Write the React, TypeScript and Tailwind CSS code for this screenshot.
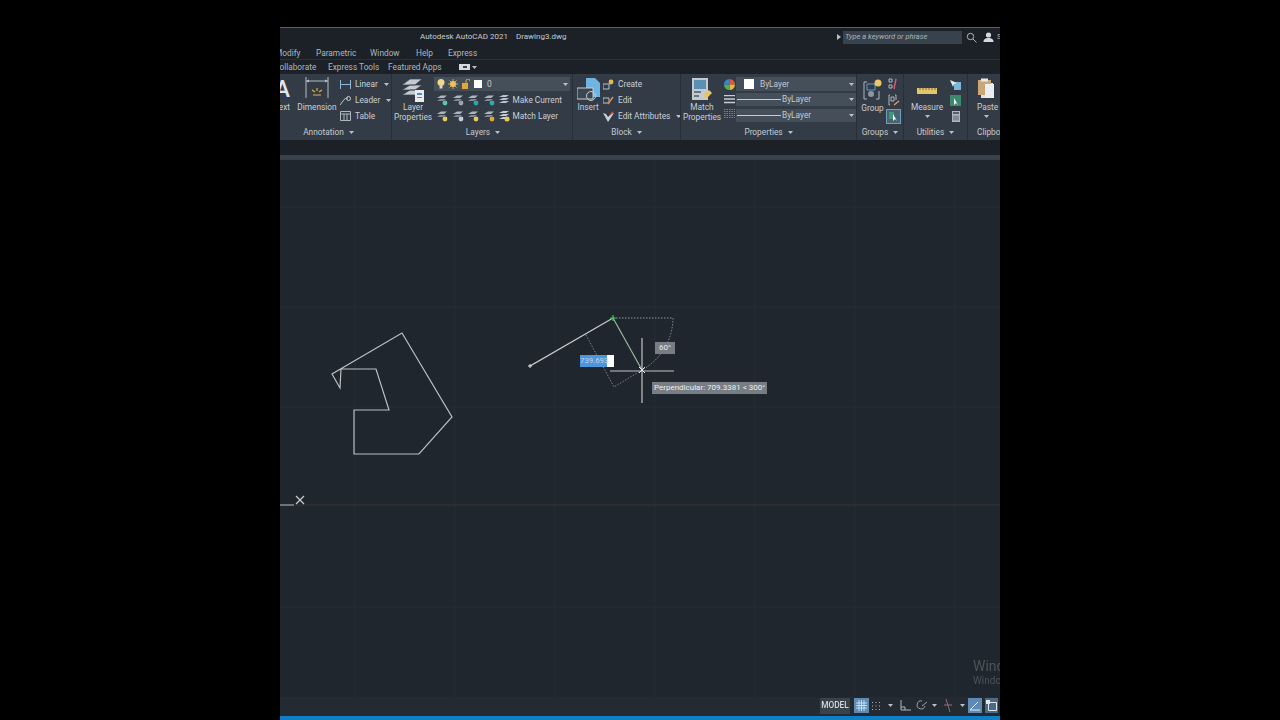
import React from "react";

const T = ({ c = "", children }: { c?: string; children: React.ReactNode }) => (
  <span className={"whitespace-nowrap " + c}>{children}</span>
);
const Caret = ({ c = "" }: { c?: string }) => (
  <svg width="5" height="3" viewBox="0 0 5 3" className={"shrink-0 " + c}><path d="M0 0h5L2.5 3z" fill="#b8c0c8" /></svg>
);

const Panel = ({ w, label, children, lc = "" }: { w: string; label: string; lc?: string; children: React.ReactNode }) => (
  <div className={"flex flex-col shrink-0 overflow-hidden border-r border-[#272f37] " + w}>
    <div className="flex h-[51px] pt-[3px] overflow-hidden">{children}</div>
    <div className={"h-[13px] mt-[1px] flex items-center justify-center gap-[5px] text-[8.3px] text-[#c3cad1] " + lc}>
      <T>{label}</T>
      <Caret />
    </div>
  </div>
);

const Row = ({ icon, label, caret, c = "" }: { icon: React.ReactNode; label: string; caret?: boolean; c?: string }) => (
  <div className={"h-[16px] flex items-center gap-[4px] text-[8.3px] text-[#c8cfd6] " + c}>
    {icon}
    <T>{label}</T>
    {caret && <Caret c="ml-[2px]" />}
  </div>
);

const Big = ({ icon, l1, l2, w, c = "" }: { icon: React.ReactNode; l1: string; l2?: string; w: string; c?: string }) => (
  <div className={"flex flex-col items-center shrink-0 text-[8.3px] leading-[10px] text-[#c8cfd6] " + w + " " + c}>
    <div className="h-[25px] flex items-end justify-center">{icon}</div>
    <T>{l1}</T>
    {l2 && <T>{l2}</T>}
  </div>
);

const LayerChip = ({ dot = "#5fc4b0", lines = "#aeb7bf" }: { dot?: string; lines?: string }) => (
  <svg width="13" height="12" viewBox="0 0 13 12" className="shrink-0">
    <path d="M1 4L5 1.5h6L8 4z" fill={lines} />
    <path d="M1 7l3-2h6l-3 2z" fill="#7f8a95" />
    <circle cx="9" cy="9" r="2.4" fill={dot} />
  </svg>
);

const Combo = ({ w, h, children, c = "" }: { w: string; h: string; children: React.ReactNode; c?: string }) => (
  <div className={"flex items-center bg-[#444f5a] text-[8.3px] text-[#c3cad1] " + w + " " + h + " " + c}>
    {children}
    <Caret c="ml-auto mr-[2px]" />
  </div>
);

const Sheet = () => (
  <svg width="20" height="22" viewBox="0 0 20 22">
    <path d="M4 6h12v15H4z" fill="#dfe3e6" />
    <path d="M1 3h13v15H1z" fill="#c9a777" />
    <path d="M4 1.5h7v3H4z" fill="#e8e8e8" />
    <path d="M8 7h9v14H8z" fill="#eceff1" />
  </svg>
);

export default function App() {
  return (
    <div className="w-[1280px] h-[720px] bg-black flex justify-center overflow-hidden" style={{ fontFamily: 'Roboto,"Noto Sans",sans-serif' }}>
      <div className="w-[720px] h-full flex flex-col overflow-hidden blur-[0.35px]">
        <div className="h-[27px] shrink-0 bg-black" />
        <div className="h-[1px] shrink-0 bg-[#3f6a78]" />

        {/* title bar */}
        <div className="h-[17px] shrink-0 bg-[#1b2127] flex items-center pt-[1px] text-[8px] text-[#c5ccd3]">
          <T c="ml-[140px]">Autodesk AutoCAD 2021</T>
          <T c="ml-[8px]">Drawing3.dwg</T>
          <svg width="4" height="6" viewBox="0 0 4 6" className="ml-auto"><path d="M0 0l4 3-4 3z" fill="#b8c0c8" /></svg>
          <div className="ml-[2px] w-[119px] h-[13px] bg-[#37424d] flex items-center pl-[2px] text-[7.5px] italic text-[#aab3bc]">
            <T>Type a keyword or phrase</T>
          </div>
          <svg width="11" height="11" viewBox="0 0 11 11" className="ml-[4px]"><circle cx="4.5" cy="4.5" r="3.2" fill="none" stroke="#aeb6be" /><path d="M7 7l3.5 3.5" stroke="#aeb6be" /></svg>
          <svg width="11" height="10" viewBox="0 0 11 10" className="ml-[6px]"><circle cx="5.5" cy="3" r="2.6" fill="#d4d9de" /><path d="M0.5 10c0-3 2-4 5-4s5 1 5 4z" fill="#d4d9de" /></svg>
          <div className="ml-[3px] w-[3px] overflow-hidden"><T c="text-[#aab3bc]">S</T></div>
        </div>

        {/* menu */}
        <div className="h-[15px] shrink-0 bg-[#1b2127] border-b border-[#29323a] flex items-center pt-[2px] text-[8.3px] text-[#aeb6be]">
          <T c="-ml-[5px] w-[25px]">Modify</T>
          <T c="ml-[16px] w-[38px]">Parametric</T>
          <T c="ml-[16px] w-[30px]">Window</T>
          <T c="ml-[16px] w-[16px]">Help</T>
          <T c="ml-[16px]">Express</T>
        </div>

        {/* tabs */}
        <div className="h-[14px] shrink-0 bg-[#1b2127] flex items-center text-[8.3px] text-[#aeb6be]">
          <T c="-ml-[6px] w-[41px]">Collaborate</T>
          <T c="ml-[13px] w-[47px]">Express Tools</T>
          <T c="ml-[13px] w-[51px]">Featured Apps</T>
          <div className="ml-[20px] w-[11px] h-[6px] bg-[#d5d9dd] flex items-center justify-center"><div className="w-[4px] h-[2px] bg-[#444]" /></div>
          <Caret c="ml-[2px]" />
        </div>

        {/* ribbon */}
        <div className="h-[66px] shrink-0 bg-[#333c46] flex overflow-hidden">
          <Panel w="w-[112px]" label="Annotation" lc="pr-[14px]">
            <div className="w-[10px] shrink-0 flex flex-col items-end overflow-hidden text-[#c8cfd6]">
              <T c="text-[23px] leading-[25px] font-medium text-[#e3e6e9]">A</T>
              <T c="text-[8.3px] leading-[10px]">ext</T>
            </div>
            <Big
              w="w-[40px]"
              c="ml-[7px]"
              l1="Dimension"
              icon={
                <svg width="24" height="22" viewBox="0 0 24 22" className="mb-[3px]">
                  <path d="M1 0v21M23 0v21M1 4h22" fill="none" stroke="#b4bcc4" />
                  <path d="M1 4l3-1.5v3zM23 4l-3-1.5v3z" fill="#b4bcc4" />
                  <path d="M7 13l3 2M17 13l-3 2M12 11v3M8 18h8" stroke="#d8b24a" strokeWidth="1.2" />
                </svg>
              }
            />
            <div className="ml-[3px] -mt-[1px] flex flex-col">
              <Row caret label="Linear" icon={<svg width="11" height="9" viewBox="0 0 11 9"><path d="M.5 0v9M10.500 0v9M.5 4.500h10" stroke="#8fb6d4" fill="none" /></svg>} />
              <Row caret label="Leader" icon={<svg width="11" height="9" viewBox="0 0 11 9"><path d="M0 9l3-4c1-2 3-3 5-3" stroke="#c0c7ce" fill="none" /><circle cx="8.500" cy="2.500" r="2" fill="none" stroke="#c0c7ce" /></svg>} />
              <Row label="Table" icon={<svg width="11" height="10" viewBox="0 0 11 10"><path d="M.5.5h10v9H.5zM.5 3h10M4 3v6.500M7 3v6.500" stroke="#aeb6be" fill="none" /></svg>} />
            </div>
          </Panel>

          <Panel w="w-[181px]" label="Layers" lc="pl-[2px]">
            <Big
              w="w-[42px]"
              l1="Layer"
              l2="Properties"
              icon={
                <svg width="24" height="24" viewBox="0 0 24 24">
                  <path d="M1 7L9 1h12l-7 6zM1 12l8-5h12l-7 5zM1 17l8-5h12l-7 5z" fill="#c4cad0" stroke="#333c46" strokeWidth=".7" />
                  <rect x="14" y="12" width="9" height="12" fill="#e8ecef" />
                  <path d="M16 15h5v2h-5zM16 19h5v1h-5z" fill="#4d8dc0" />
                </svg>
              }
            />
            <div className="flex flex-col">
              <Combo w="w-[136px]" h="h-[14px]" c="pl-[3px] gap-[2px]">
                <svg width="8" height="10" viewBox="0 0 8 10"><circle cx="4" cy="3.500" r="3.500" fill="#f2d58a" /><path d="M2.500 7h3v2.500h-3z" fill="#d9d9d9" /></svg>
                <svg width="10" height="10" viewBox="0 0 10 10" className="ml-[1px]"><circle cx="5" cy="5" r="3" fill="#f0c060" /><path d="M5 0v10M0 5h10M1.500 1.500l7 7M8.500 1.500l-7 7" stroke="#f0c060" strokeWidth=".8" /></svg>
                <svg width="9" height="10" viewBox="0 0 9 10" className="ml-[1px]"><path d="M1 4h6v6H1z" fill="#e0a93c" /><path d="M5 4V2a2 2 0 0 1 4 0" fill="none" stroke="#e0a93c" /></svg>
                <div className="ml-[2px] w-[8px] h-[8px] bg-white" />
                <T c="ml-[3px]">0</T>
              </Combo>
              <div className="h-[16px] mt-[1px] flex items-center pl-[2px] gap-[2.500px] text-[8.3px] text-[#c8cfd6]">
                <LayerChip /><LayerChip dot="#9aa4ad" /><LayerChip dot="#2fa8a0" /><LayerChip dot="#3aa8a8" />
                <svg width="12" height="12" viewBox="0 0 12 12"><path d="M1 3l4-2h6L8 3zM1 6l4-2h6L8 6zM1 9l4-2h6L8 9z" fill="#b7c3cf" /></svg>
                <T>Make Current</T>
              </div>
              <div className="h-[16px] flex items-center pl-[2px] gap-[2.500px] text-[8.3px] text-[#c8cfd6]">
                <LayerChip dot="#e8c860" /><LayerChip dot="#c6ccd2" /><LayerChip dot="#e8c860" /><LayerChip dot="#e0a93c" />
                <svg width="12" height="12" viewBox="0 0 12 12"><path d="M1 3l4-2h6L8 3zM1 6l4-2h6L8 6zM1 9l4-2h6L8 9z" fill="#c8ced4" /><circle cx="9" cy="9" r="2.500" fill="#e8c860" /></svg>
                <T>Match Layer</T>
              </div>
            </div>
          </Panel>

          <Panel w="w-[108px]" label="Block">
            <Big
              w="w-[30px]"
              l1="Insert"
              icon={
                <svg width="23" height="24" viewBox="0 0 23 24">
                  <path d="M9 0h9l5 5v14H9z" fill="#6fb5e3" />
                  <path d="M0 10h16v11H0z" fill="#3b4651" stroke="#c7ced5" />
                  <circle cx="14" cy="18" r="4.500" fill="none" stroke="#c7ced5" />
                </svg>
              }
            />
            <div className="-mt-[1px] flex flex-col">
              <Row label="Create" icon={<svg width="11" height="11" viewBox="0 0 11 11"><path d="M0 5h6v5H0z" fill="none" stroke="#b9c1c8" /><circle cx="8" cy="3" r="2.400" fill="#e8b75a" /></svg>} />
              <Row label="Edit" icon={<svg width="11" height="11" viewBox="0 0 11 11"><path d="M0 3h6v5H0z" fill="none" stroke="#b9c1c8" /><path d="M5 9l5-7" stroke="#e0885a" strokeWidth="1.500" /></svg>} />
              <Row caret label="Edit Attributes" icon={<svg width="11" height="11" viewBox="0 0 11 11"><path d="M0 2l5 9 6-9-3 1-3 3-2-3z" fill="#c9d0d6" /><path d="M7 4l3-3" stroke="#d05a4a" strokeWidth="1.200" /></svg>} />
            </div>
          </Panel>

          <Panel w="w-[176px]" label="Properties">
            <Big
              w="w-[40px]"
              c="ml-[1px]"
              l1="Match"
              l2="Properties"
              icon={
                <svg width="22" height="24" viewBox="0 0 22 24">
                  <path d="M1 0h16v22H1z" fill="#c4cad0" />
                  <path d="M3 2h12v9H3z" fill="#5c8fb4" />
                  <path d="M3 13h7v2H3zM3 17h5v2H3z" fill="#6b7680" />
                  <path d="M12 17l6-5 3 3-6 6z" fill="#e4c56e" />
                </svg>
              }
            />
            <div className="flex flex-col items-center w-[14px] pt-[2px] ml-[1px] gap-[5px]">
              <svg width="11" height="11" viewBox="0 0 11 11">
                <path d="M5.500 5.500V0A5.500 5.500 0 0 1 11 5.500z" fill="#e0563f" />
                <path d="M5.500 5.500H11A5.500 5.500 0 0 1 5.500 11z" fill="#e8b73c" />
                <path d="M5.500 5.500V11A5.500 5.500 0 0 1 0 5.500z" fill="#4fae5a" />
                <path d="M5.500 5.500H0A5.500 5.500 0 0 1 5.500 0z" fill="#3d86c6" />
              </svg>
              <svg width="11" height="9" viewBox="0 0 11 9"><path d="M0 .5h11M0 4h11M0 7.500h11" stroke="#c6ccd2" strokeWidth="1.500" /></svg>
              <svg width="11" height="9" viewBox="0 0 11 9"><path d="M0 .5h11M0 2.500h11M0 4.500h11M0 6.500h11M0 8.500h11" stroke="#98a1aa" strokeWidth=".7" strokeDasharray="1.500 1" /></svg>
            </div>
            <div className="flex flex-col ml-[1px]">
              <Combo w="w-[120px]" h="h-[14px]" c="pl-[8px]">
                <div className="w-[10px] h-[10px] bg-white" />
                <T c="ml-[6px]">ByLayer</T>
              </Combo>
              <Combo w="w-[120px]" h="h-[13px]" c="mt-[2px]">
                <div className="ml-[1px] w-[44px] h-[1px] bg-[#c3cad1]" />
                <T c="ml-[1px]">ByLayer</T>
              </Combo>
              <Combo w="w-[120px]" h="h-[13px]" c="mt-[3px]">
                <div className="ml-[1px] w-[44px] h-[1px] bg-[#c3cad1]" />
                <T c="ml-[1px]">ByLayer</T>
              </Combo>
            </div>
          </Panel>

          <Panel w="w-[47px]" label="Groups">
            <div className="flex flex-col items-center w-[27px] ml-[2px] text-[8.3px] text-[#c8cfd6]">
              <svg width="20" height="21" viewBox="0 0 20 21" className="mt-[2px]">
                <path d="M4 3H1v17h3M13 20h3V12" fill="none" stroke="#aeb6be" />
                <path d="M4 5h8v6H4z" fill="none" stroke="#5d9cc9" />
                <circle cx="8" cy="15" r="3" fill="#8d96a0" />
                <circle cx="15" cy="4" r="3.500" fill="#ecc566" />
              </svg>
              <T c="mt-[2px]">Group</T>
            </div>
            <div className="flex flex-col items-center w-[15px] gap-[4px] pt-[1px]">
              <svg width="11" height="12" viewBox="0 0 11 12"><path d="M1 1h3v3H1zM1 7h3v3H1z" fill="none" stroke="#aeb6be" /><path d="M8 1l-2 10" stroke="#d05a6a" strokeWidth="1.500" /></svg>
              <svg width="12" height="12" viewBox="0 0 12 12"><path d="M2 1H1v10h1M7 1h1v5M3 3h3v4H3z" fill="none" stroke="#aeb6be" /><path d="M6 11l5-4" stroke="#e0a05a" strokeWidth="1.500" /></svg>
              <div className="w-[15px] h-[15px] -mt-[1px] border border-[#6f9dbd] bg-[#4a6373] flex items-center justify-center">
                <svg width="11" height="11" viewBox="0 0 11 11"><path d="M1 1h5v7H1z" fill="#3c9a78" /><path d="M5 3v7l2-2 2 2z" fill="#fff" /></svg>
              </div>
            </div>
          </Panel>

          <Panel w="w-[64px]" label="Utilities">
            <div className="flex flex-col items-center w-[46px] text-[8.3px] text-[#c8cfd6]">
              <svg width="20" height="6" viewBox="0 0 20 6" className="mt-[11px]"><path d="M0 0h20v6H0z" fill="#e2c66e" /><path d="M3 0v2M6 0v2M9 0v2M12 0v2M15 0v2M18 0v2" stroke="#7c6a30" /></svg>
              <T c="mt-[8px] leading-[10px]">Measure</T>
              <Caret c="mt-[3px]" />
            </div>
            <div className="flex flex-col items-center w-[11px] gap-[5px] pt-[2px]">
              <svg width="11" height="11" viewBox="0 0 11 11"><path d="M4 3h7v8H4z" fill="#7eb6d8" /><path d="M0 1l3 7 1-3 3-1z" fill="#e7ebee" /></svg>
              <svg width="11" height="11" viewBox="0 0 11 11"><path d="M0 0h11v11H0z" fill="#3c8a6c" /><path d="M4 3v7l2-2 2 2z" fill="#fff" /></svg>
              <svg width="8" height="11" viewBox="0 0 8 11"><path d="M0 0h8v11H0z" fill="#aeb6be" /><path d="M1 1h6v2H1z" fill="#566069" /><path d="M2 4.500v5M4 4.500v5M6 4.500v5" stroke="#566069" /></svg>
            </div>
          </Panel>

          <div className="flex flex-col shrink-0 w-[32px] overflow-hidden text-[8.3px] text-[#c8cfd6]">
            <div className="h-[51px] pt-[3px] pl-[9px] flex flex-col items-start">
              <Sheet />
              <T c="leading-[10px] mt-[3px]">Paste</T>
              <Caret c="mt-[3px] ml-[7px]" />
            </div>
            <T c="h-[13px] mt-[1px] ml-[9px] flex items-center text-[#c3cad1]">Clipboard</T>
          </div>
        </div>

        <div className="h-[15px] shrink-0 bg-[#1b2127]" />
        <div className="h-[5px] shrink-0 bg-[#39414a]" />

        {/* drawing area */}
        <div className="relative flex-1 bg-[#1f262d] overflow-hidden">
          <svg width="720" height="537" viewBox="280 160 720 537" className="block">
            <path d="M355 160v537M455 160v537M555 160v537M655 160v537M755 160v537M855 160v537M955 160v537M280 207h720M280 307h720M280 407h720M280 607h720" stroke="#262d34" fill="none" />
            <path d="M295 505H1000" stroke="#41303a" />
            <path d="M280 505h14" stroke="#b8bec4" />
            <path d="M296 496l8 8M304 496l-8 8" stroke="#c8cdd2" strokeWidth="1.200" />
            <path d="M402 333L452 417 419 454H354V410H389L376 369H341L340 388 332 374Z" fill="none" stroke="#b9bfc5" strokeWidth="1.200" />
            <path d="M530 366L613 318" stroke="#c8cdd2" strokeWidth="1.200" />
            <path d="M528 366h4M530 364v4" stroke="#e0e3e6" />
            <path d="M613 318L642 370" stroke="#98b89f" strokeWidth="1.200" />
            <path d="M610 318h6M613 315v6" stroke="#3fc25a" strokeWidth="1.200" />
            <path d="M613 318H673A60 60 0 0 1 642 370" fill="none" stroke="#8e959c" strokeDasharray="1.500 1.500" />
            <path d="M586 335L614 387 642 370" fill="none" stroke="#7a8289" strokeDasharray="1.500 1.500" />
            <path d="M642 338V403M610 371H674" stroke="#bfc4c9" strokeWidth="1.200" />
            <path d="M639 367l6 6M645 367l-6 6" stroke="#e4e6e8" />
          </svg>
          <div className="absolute left-[300px] top-[195px] w-[34px] h-[12px] bg-white flex items-center">
            <div className="w-[27px] h-full bg-[#4b97de] text-[7.8px] leading-[12px] text-[#c2d3e4] text-center"><T>739.693</T></div>
          </div>
          <div className="absolute left-[375px] top-[182px] w-[20px] h-[12px] bg-[#777d83] flex items-center justify-center text-[8px] text-[#e6e8ea]"><T>60°</T></div>
          <div className="absolute left-[372px] top-[222px] w-[115px] h-[12px] bg-[#777d83] flex items-center pl-[2px] text-[8px] text-[#eceeef]"><T>Perpendicular: 709.3381 &lt; 300°</T></div>
          <div className="absolute left-[693px] top-[498px] flex flex-col text-[#4c5359]">
            <T c="text-[14px] leading-[16px]">Windows</T>
            <T c="text-[10px] leading-[14px]">Windows</T>
          </div>
        </div>

        {/* status bar */}
        <div className="h-[19px] shrink-0 bg-[#232a32] flex items-center justify-end pr-[2px] pb-[2px]">
          <div className="w-[30px] h-[16px] bg-[#39424b] flex items-center justify-center text-[8.3px] font-medium text-[#d3d8dd]"><T>MODEL</T></div>
          <div className="ml-[4px] w-[15px] h-[15px] bg-[#5f8ab3] flex items-center justify-center">
            <svg width="11" height="11" viewBox="0 0 11 11"><path d="M0 3h11M0 5.500h11M0 8h11M3 0v11M5.500 0v11M8 0v11" stroke="#e3edf5" strokeWidth=".8" /></svg>
          </div>
          <svg width="10" height="10" viewBox="0 0 10 10" className="ml-[2px]"><path d="M1 1.500h1M4.500 1.500h1M8 1.500h1M1 5h1M4.500 5h1M8 5h1M1 8.500h1M4.500 8.500h1M8 8.500h1" stroke="#aeb6be" /></svg>
          <Caret c="ml-[7px]" />
          <svg width="12" height="12" viewBox="0 0 12 12" className="ml-[7px]"><path d="M1 0v10h10M1 7h4v3" fill="none" stroke="#aeb6be" /></svg>
          <svg width="11" height="11" viewBox="0 0 11 11" className="ml-[4px]"><path d="M9 6a4 4 0 1 1-3-5M6 6l5-4" fill="none" stroke="#9aa3ac" /></svg>
          <Caret c="ml-[5px]" />
          <svg width="8" height="13" viewBox="0 0 8 13" className="ml-[7px]"><path d="M2 0l4 13M0 6h8" stroke="#8e6f76" /></svg>
          <Caret c="ml-[8px]" />
          <div className="ml-[3px] w-[14px] h-[15px] bg-[#5f8ab3] flex items-center justify-center">
            <svg width="10" height="10" viewBox="0 0 10 10"><path d="M0 9h10M0 9l8-8" stroke="#e3edf5" /></svg>
          </div>
          <div className="ml-[3px] w-[13px] h-[15px] bg-[#4a6a86] flex items-center justify-center">
            <svg width="11" height="11" viewBox="0 0 11 11"><path d="M2.500 2.500h8v8h-8z" fill="none" stroke="#dce7f0" /><path d="M0 0h4v4H0z" fill="#dce7f0" /></svg>
          </div>
        </div>
        <div className="h-[4px] shrink-0 bg-[#0f7fc6]" />
      </div>
    </div>
  );
}
